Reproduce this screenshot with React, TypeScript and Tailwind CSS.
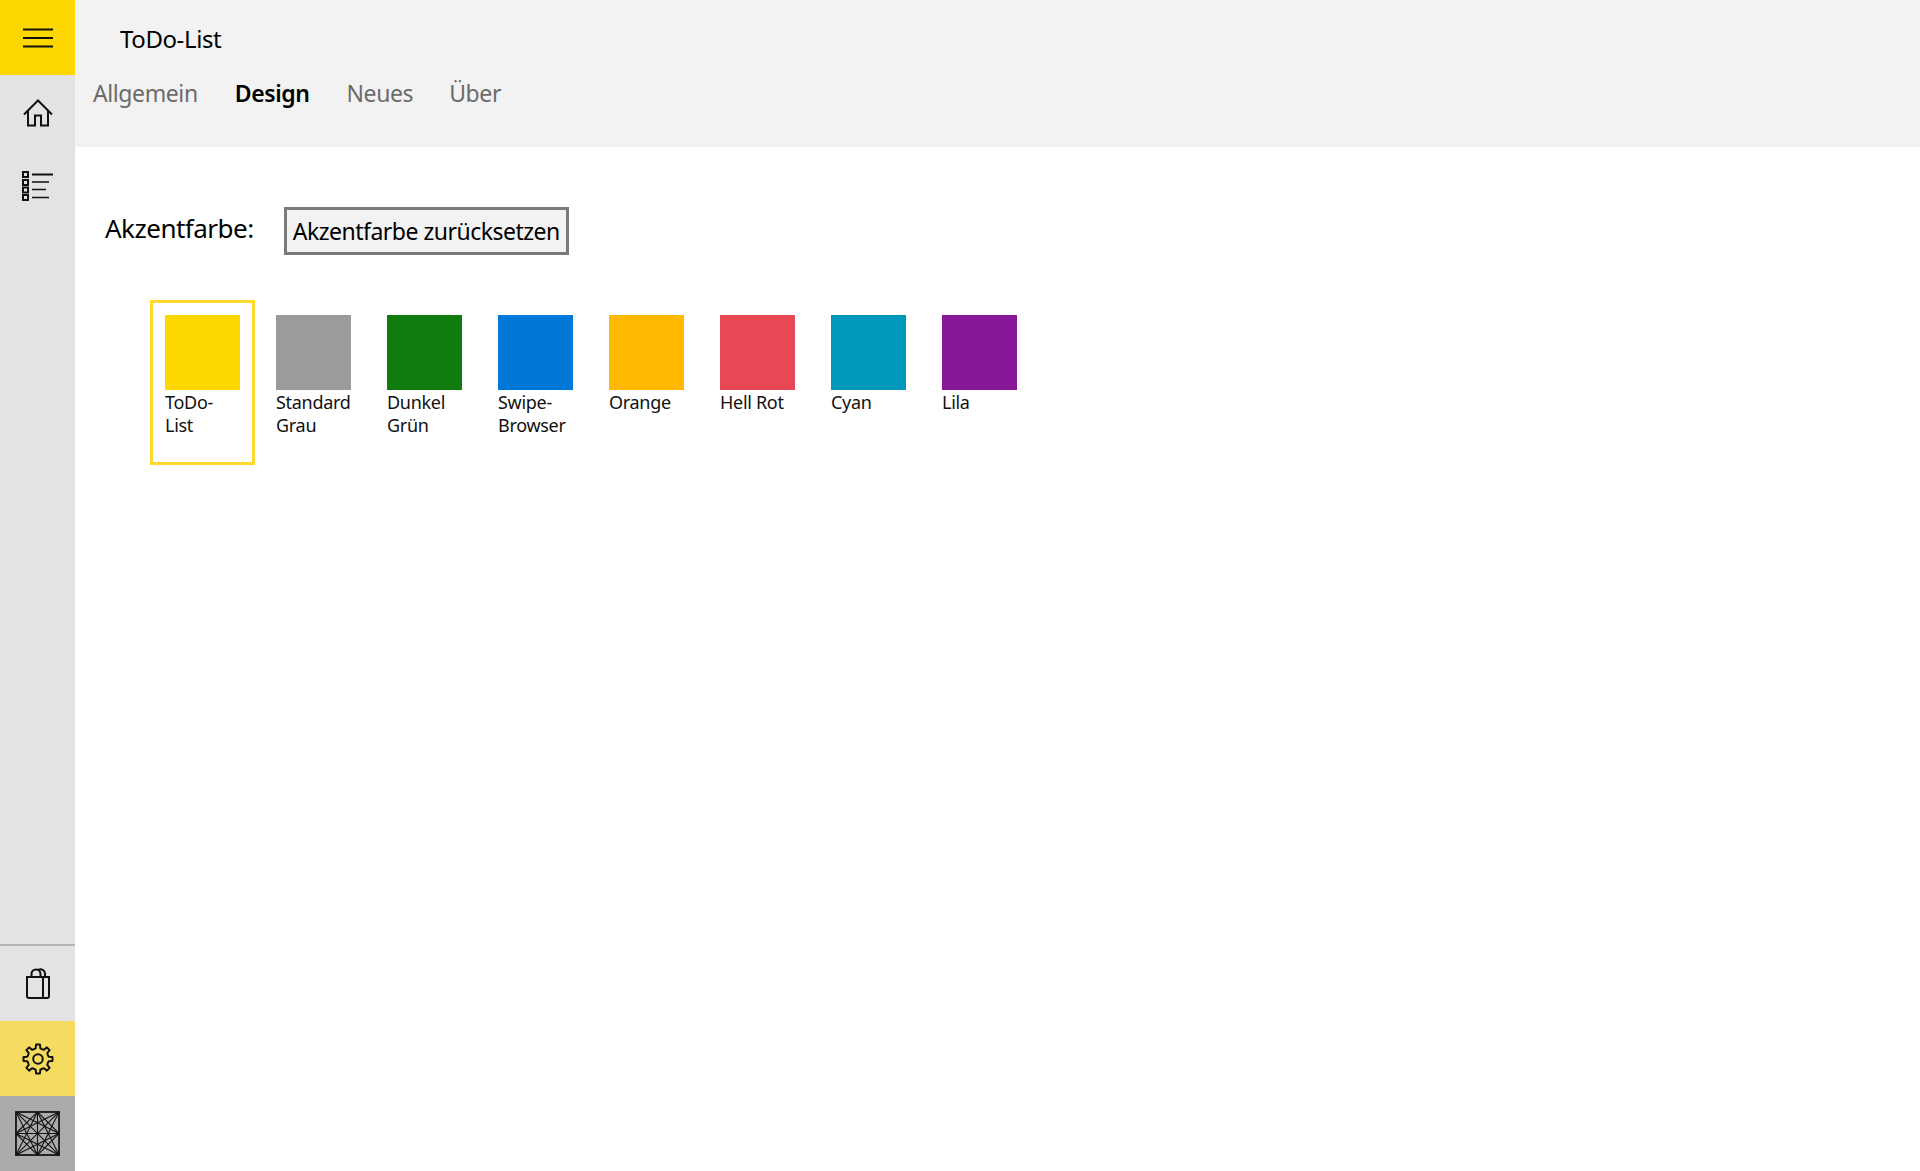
const gearPath = (() => {
  const c = 16;
  const pts: string[] = [];
  const n = 8;
  for (let i = 0; i < n; i++) {
    const a = (i / n) * Math.PI * 2 - Math.PI / 2;
    const s = (Math.PI * 2) / n;
    const rows: [number, number][] = [
      [-0.5, 10.6],
      [-0.27, 11],
      [-0.17, 14.6],
      [0.17, 14.6],
      [0.27, 11],
    ];
    rows.forEach(([o, r]) => {
      const t = a + o * s;
      pts.push(`${(c + r * Math.cos(t)).toFixed(2)} ${(c + r * Math.sin(t)).toFixed(2)}`);
    });
  }
  return "M" + pts.join("L") + "Z";
})();

const swatches = [
  { c: "bg-[#ffd700]", a: "ToDo-", b: "List", selected: true },
  { c: "bg-[#9b9b9b]", a: "Standard", b: "Grau" },
  { c: "bg-[#107c10]", a: "Dunkel", b: "Grün" },
  { c: "bg-[#0078d7]", a: "Swipe-", b: "Browser" },
  { c: "bg-[#ffb900]", a: "Orange" },
  { c: "bg-[#e74856]", a: "Hell Rot" },
  { c: "bg-[#0099bc]", a: "Cyan" },
  { c: "bg-[#881798]", a: "Lila" },
];

const avatarPts: [number, number, number, number][] = [
  [0, 0, 44, 44], [44, 0, 0, 44], [22, 0, 22, 44], [0, 22, 44, 22],
  [0, 0, 22, 44], [0, 0, 44, 22], [44, 0, 22, 44], [44, 0, 0, 22],
  [0, 44, 22, 0], [0, 44, 44, 22], [44, 44, 22, 0], [44, 44, 0, 22],
  [22, 0, 0, 22], [22, 0, 44, 22], [22, 44, 0, 22], [22, 44, 44, 22],
];

function NavCell({ className, children }: { className?: string; children: React.ReactNode }) {
  return <div className={`flex h-[75px] w-[75px] items-center justify-center ${className ?? ""}`}>{children}</div>;
}

export default function App() {
  return (
    <div className="flex h-[1171px] w-[1920px] overflow-hidden bg-white font-['Noto_Sans','Open_Sans',sans-serif] text-black">
      <aside className="flex w-[75px] shrink-0 flex-col bg-[#e3e3e3]">
        <NavCell className="bg-[#ffd700]">
          <svg width="30" height="20" viewBox="0 0 30 20" fill="none" stroke="#111" strokeWidth="2">
            <path d="M0 1.5H30M0 10H30M0 18.500H30" />
          </svg>
        </NavCell>
        <NavCell>
          <svg width="30" height="28" viewBox="0 0 30 28" fill="none" stroke="#111" strokeWidth="2">
            <path d="M1 15.500 15 1.500 29 15.500M5 11.500V26.500H12V16.500H18V26.500H25V11.500" />
          </svg>
        </NavCell>
        <NavCell className="mt-[-2px]">
          <svg width="32" height="30" viewBox="0 0 32 30" fill="none" stroke="#111">
            <g strokeWidth="2">
              <path d="M1 1H6V6H1ZM1 9H6V14H1ZM1 16.500H6V21.500H1ZM1 24H6V29H1Z" />
            </g>
            <path d="M10 3.500H31" strokeWidth="2" />
            <path d="M10 11H27M10 18.500H24M10 26.500H27" strokeWidth="1.700" />
          </svg>
        </NavCell>
        <div className="mt-auto h-[77px] border-t-2 border-[#b5b5b5]">
          <NavCell>
            <svg width="26" height="31" viewBox="0 0 26 31" fill="none" stroke="#111" strokeWidth="2">
              <path d="M2 9H24V28A2 2 0 0 1 22 30H4A2 2 0 0 1 2 28ZM18 9V30M6.500 9V6A4.500 4.500 0 0 1 15.500 6V9M13 2A4.500 4.500 0 0 1 20 6V9" />
            </svg>
          </NavCell>
        </div>
        <NavCell className="bg-[#f5dc60]">
          <svg width="32" height="32" viewBox="0 0 32 32" fill="none" stroke="#111" strokeWidth="2" strokeLinejoin="round">
            <path d="M16 5.500" />
            <path d={gearPath} />
            <circle cx="16" cy="16" r="4.800" />
          </svg>
        </NavCell>
        <NavCell className="bg-[#ababab]">
          <svg width="45" height="45" viewBox="-1 -1 46 46" fill="none" stroke="#111" strokeWidth="1.100">
            <rect x="0" y="0" width="44" height="44" strokeWidth="1.800" />
            {avatarPts.map(([a, b, c, d], i) => (
              <line key={i} x1={a} y1={b} x2={c} y2={d} />
            ))}
          </svg>
        </NavCell>
      </aside>
      <main className="flex min-w-0 flex-1 flex-col">
        <header className="h-[147px] shrink-0 bg-[#f2f2f2]">
          <h1 className="pl-[45px] pt-[21px] text-[24px] font-normal leading-[36px] tracking-[-0.4px]">ToDo-List</h1>
          <nav className="mt-[19px] flex pl-[18px] text-[23px] leading-[34px] tracking-[-0.4px] text-[#6b6b6b]">
            <span className="mr-[37px]">Allgemein</span>
            <span className="mr-[37px] font-semibold text-black">Design</span>
            <span className="mr-[36px]">Neues</span>
            <span>Über</span>
          </nav>
        </header>
        <section className="pl-[30px] pt-[60px]">
          <div className="flex items-start">
            <span className="mr-[30px] mt-[3px] text-[26px] leading-[36px] tracking-[-0.5px]">Akzentfarbe:</span>
            <button className="h-[48px] w-[285px] border-[3px] border-[#7a7a7a] bg-[#f2f2f2] text-[23px] leading-[34px] tracking-[-0.5px]">
              Akzentfarbe zurücksetzen
            </button>
          </div>
          <div className="ml-[45px] mt-[45px] flex gap-[6px]">
            {swatches.map((s) => (
              <div
                key={s.a}
                className={`h-[165px] w-[105px] border-[3px] pl-[12px] pt-[12px] ${s.selected ? "border-[#ffd92e]" : "border-transparent"}`}
              >
                <div className={`h-[75px] w-[75px] ${s.c}`} />
                <div className="mt-[1px] whitespace-nowrap text-[18px] leading-[23px] tracking-[-0.3px] text-[#111]">
                  {s.a}
                  {s.b && <br />}
                  {s.b}
                </div>
              </div>
            ))}
          </div>
        </section>
      </main>
    </div>
  );
}
